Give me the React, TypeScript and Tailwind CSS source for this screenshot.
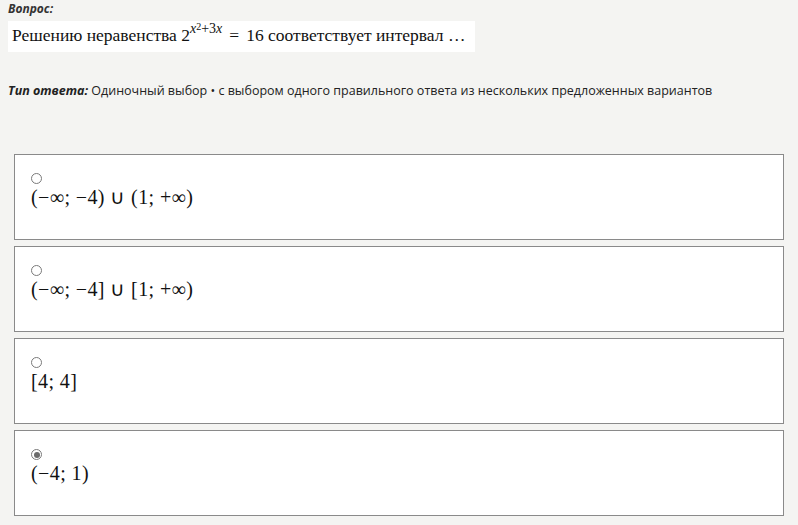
const options = [
  { label: "(−∞; −4) ∪ (1; +∞)", checked: false },
  { label: "(−∞; −4] ∪ [1; +∞)", checked: false },
  { label: "[4; 4]", checked: false },
  { label: "(−4; 1)", checked: true },
];

function Radio({ checked }: { checked: boolean }) {
  return (
    <span className="flex h-[11px] w-[11px] items-center justify-center rounded-full border border-[#7a7a7a] bg-white">
      {checked && <span className="h-[6px] w-[6px] rounded-full bg-[#6b6b6b]" />}
    </span>
  );
}

export default function App() {
  return (
    <div className="h-[525px] w-[798px] overflow-hidden bg-[#f4f4f2] font-['Open_Sans',sans-serif] text-[#222]">
      <div className="px-2 pt-[2px]">
        <p className="text-[12px] font-bold italic leading-[14px] text-[#333]">Вопрос:</p>
        <div className="mt-[5px] inline-block bg-white py-[3px] pl-1 pr-[10px] font-['Liberation_Serif',serif] text-[17.5px] leading-[22px] text-[#111]">
          Решению неравенства 2
          <span className="relative top-[-8px] text-[14px] italic">
            x<span className="relative top-[-3px] text-[10px] not-italic">2</span>
            <span className="not-italic">+3</span>x
          </span>
          <span className="mx-[7px]">=</span>16 соответствует интервал …
        </div>
        <p className="mt-[30px] text-[12.5px] leading-[18px] text-[#222]">
          <span className="font-bold italic">Тип ответа:</span> Одиночный выбор • с выбором одного
          правильного ответа из нескольких предложенных вариантов
        </p>
      </div>

      <div className="ml-[14px] mt-[54px] flex w-[770px] flex-col gap-[6px]">
        {options.map((o) => (
          <div key={o.label} className="h-[86px] border border-[#8a8a8a] bg-white px-[16px] pt-[18px]">
            <Radio checked={o.checked} />
            <div className="mt-[1px] font-['Liberation_Serif',serif] text-[20px] leading-[24px] tracking-[0.4px] text-[#111]">
              {o.label}
            </div>
          </div>
        ))}
      </div>
    </div>
  );
}
